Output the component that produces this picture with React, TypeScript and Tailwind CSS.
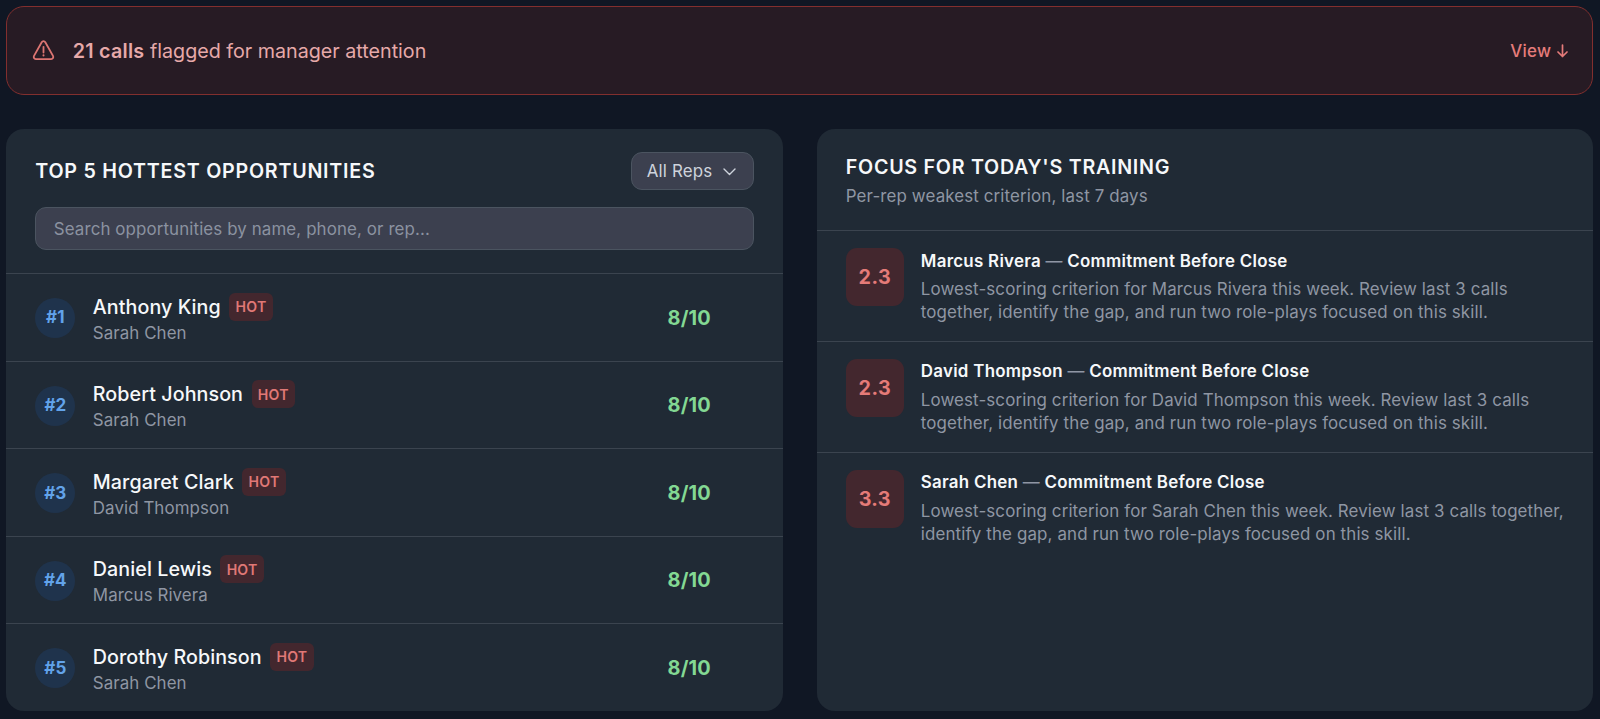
const opportunities = [
  { name: 'Anthony King', rep: 'Sarah Chen', score: 8 },
  { name: 'Robert Johnson', rep: 'Sarah Chen', score: 8 },
  { name: 'Margaret Clark', rep: 'David Thompson', score: 8 },
  { name: 'Daniel Lewis', rep: 'Marcus Rivera', score: 8 },
  { name: 'Dorothy Robinson', rep: 'Sarah Chen', score: 8 },
];

const training = [
  { rep: 'Marcus Rivera', criterion: 'Commitment Before Close', score: '2.3' },
  { rep: 'David Thompson', criterion: 'Commitment Before Close', score: '2.3' },
  { rep: 'Sarah Chen', criterion: 'Commitment Before Close', score: '3.3' },
];

function AlertBanner() {
  return (
    <div className="flex h-[89px] items-center rounded-[18px] border-[1.5px] border-[#822f2e] bg-[#271b24] pl-[25px] pr-[24px]">
      <svg
        className="size-[23px] shrink-0"
        viewBox="0 0 23 23"
        fill="none"
        stroke="#dd7572"
        strokeWidth="1.8"
        strokeLinecap="round"
        strokeLinejoin="round"
      >
        <path d="M9.7 3.2 2 16.9c-.8 1.5.2 3.2 1.8 3.2h15.4c1.6 0 2.6-1.7 1.8-3.2L13.3 3.200c-.8-1.400-2.800-1.400-3.600 0Z" />
        <path d="M11.5 7.800v5.700" />
        <path d="M11.5 16.300v.1" strokeWidth="2" />
      </svg>
      <p className="ml-[17.5px] text-[19.7px] leading-7 text-[#e6a9a9]">
        <span className="font-semibold tracking-[0.25px]">21 calls</span> flagged for manager
        attention
      </p>
      <a className="ml-auto flex items-center gap-[6px] pt-[2px] text-[16.9px] font-medium tracking-[0.3px] text-[#e57b7a]">
        View
        <svg
          className="h-[14px] w-[11px]"
          viewBox="0 0 11 14"
          fill="none"
          stroke="currentColor"
          strokeWidth="1.7"
          strokeLinecap="round"
          strokeLinejoin="round"
        >
          <path d="M5.5 1v11.5M1 8l4.5 4.5L10 8" />
        </svg>
      </a>
    </div>
  );
}

function Opportunities() {
  return (
    <section className="flex flex-col overflow-hidden rounded-[18px] bg-[#202a35]">
      <div className="flex h-[144.3px] flex-col px-[29px] pt-[23px]">
        <div className="flex items-center justify-between">
          <h2 className="text-[19.7px] font-semibold leading-7 tracking-[0.75px] text-[#f6f8fa]">
            TOP 5 HOTTEST OPPORTUNITIES
          </h2>
          <button className="flex h-[38px] w-[123px] items-center justify-between rounded-[11px] border-[1.5px] border-[#4b5460] bg-[#3c404f] pl-[15px] pr-[17px] pt-[2px] text-[16.9px] tracking-[0.15px] text-[#ced3dc]">
            All Reps
            <svg
              className="mb-px h-[8px] w-[13px]"
              viewBox="0 0 13 8"
              fill="none"
              stroke="currentColor"
              strokeWidth="1.4"
              strokeLinecap="round"
              strokeLinejoin="round"
            >
              <path d="M1 1l5.5 5.5L12 1" />
            </svg>
          </button>
        </div>
        <input
          className="mt-[17px] h-[43px] w-full rounded-[11px] border-[1.5px] border-[#4b5460] bg-[#3c404f] px-[17.5px] text-[16.9px] tracking-[0.11px] outline-none placeholder:text-[#8b92a0]"
          placeholder="Search opportunities by name, phone, or rep..."
        />
      </div>
      {opportunities.map((o, i) => (
        <div
          key={i}
          className="flex h-[87.7px] items-center border-t-[1.5px] border-[#3b444f] pl-[29px] pr-[72px] pt-[1.5px]"
        >
          <span className="flex size-10 items-center justify-center rounded-full bg-[#1f334c] text-[17px] font-bold text-[#62a3ea]">
            #{i + 1}
          </span>
          <div className="ml-[17.5px] pt-px">
            <div className="flex items-center gap-[8.5px]">
              <span className="text-[19.7px] font-medium leading-7 tracking-[0.07px] text-[#f6f8fa]">
                {o.name}
              </span>
              <span className="flex h-7 items-center rounded-[6px] bg-[#43272e] px-[6.3px] text-[14.1px] font-semibold tracking-[0.2px] text-[#e07876]">
                HOT
              </span>
            </div>
            <p className="text-[16.9px] leading-6 tracking-[0.08px] text-[#8f96a3]">{o.rep}</p>
          </div>
          <span className="ml-auto pt-px text-[19.9px] font-bold tracking-[0.15px] text-[#83d893]">
            {o.score}/10
          </span>
        </div>
      ))}
    </section>
  );
}

function TrainingFocus() {
  return (
    <section className="overflow-hidden rounded-[18px] bg-[#202a35]">
      <div className="h-[101.2px] px-[29px] pt-[23.5px]">
        <h2 className="text-[19.7px] font-semibold leading-7 tracking-[0.72px] text-[#f6f8fa]">
          FOCUS FOR TODAY'S TRAINING
        </h2>
        <p className="pt-px text-[16.9px] leading-[29px] tracking-[0.13px] text-[#8f96a3]">
          Per-rep weakest criterion, last 7 days
        </p>
      </div>
      {training.map((t, i) => (
        <div
          key={i}
          className="flex h-[110.7px] items-start border-t-[1.5px] border-[#3b444f] pl-[29px] pr-[24px] pt-[17px]"
        >
          <span className="flex size-[58px] shrink-0 items-center justify-center rounded-[11px] bg-[#43272e] pt-[1.5px] text-[19.7px] font-bold tracking-[0.4px] text-[#e57b78]">
            {t.score}
          </span>
          <div className="ml-[17px] pt-[0.4px]">
            <h3 className="text-[16.9px] font-semibold leading-6 tracking-[0.28px] text-[#f6f8fa]">
              {t.rep} <span className="font-normal text-[#8f96a3]">—</span> {t.criterion}
            </h3>
            <p className="mt-[5.6px] text-[16.9px] leading-[23px] tracking-[0.13px] text-[#8f96a3]">
              {`Lowest-scoring criterion for ${t.rep} this week. Review last 3 calls together, identify the gap, and run two role-plays focused on this skill.`}
            </p>
          </div>
        </div>
      ))}
    </section>
  );
}

export default function App() {
  return (
    <div className="h-[719px] overflow-hidden bg-[#101724] pl-[6.3px] pr-[6.7px] pt-[6px] font-['Inter',sans-serif]">
      <AlertBanner />
      <div className="mt-[34px] grid h-[582px] grid-cols-2 gap-[34px]">
        <Opportunities />
        <TrainingFocus />
      </div>
    </div>
  );
}
